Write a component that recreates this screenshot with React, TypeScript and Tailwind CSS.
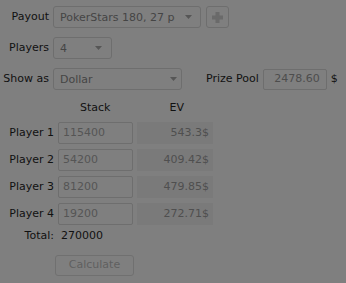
import React from 'react';

const players = [
  { name: 'Player 1', stack: '115400', ev: '543.3$' },
  { name: 'Player 2', stack: '54200', ev: '409.42$' },
  { name: 'Player 3', stack: '81200', ev: '479.85$' },
  { name: 'Player 4', stack: '19200', ev: '272.71$' },
];

function Arrow() {
  return (
    <svg width="7" height="4" viewBox="0 0 7 4" className="shrink-0">
      <path d="M0 0h7L3.5 4z" fill="#565656" />
    </svg>
  );
}

function Select({ value, width, arrowPad = 'pr-2' }: { value: string; width: string; arrowPad?: string }) {
  return (
    <div
      className={`${width} h-[22px] flex items-center justify-between pl-[6px] ${arrowPad} border border-[#6e6e6e] rounded-[3px] bg-[#7f7f7f]`}
    >
      <span className="overflow-hidden whitespace-nowrap text-[#454545] leading-none">{value}</span>
      <Arrow />
    </div>
  );
}

export default function App() {
  return (
    <div className="w-[346px] h-[283px] bg-[#7f7f7f] font-['DejaVu_Sans',sans-serif] text-[11px] text-[#111] overflow-hidden">
      <div className="pt-[6px] flex flex-col gap-[9px]">
        <div className="flex items-center">
          <span className="w-[49px] text-right">Payout</span>
          <div className="ml-[4px] w-[148px] h-[22px] flex items-center pl-[6px] pr-[8px] border border-[#6e6e6e] rounded-[3px]">
            <span className="w-[115px] overflow-hidden whitespace-nowrap text-[#454545] leading-none">
              PokerStars 180, 27 positions
            </span>
            <span className="ml-auto"><Arrow /></span>
          </div>
          <div className="ml-[5px] w-[23px] h-[22px] border border-[#6e6e6e] rounded-[3px] flex items-center justify-center">
            <svg width="11" height="11" viewBox="0 0 11 11">
              <path d="M3.5 0h4v3.5H11v4H7.5V11h-4V7.5H0v-4h3.5z" fill="#6a6a6a" />
            </svg>
          </div>
        </div>
        <div className="flex items-center">
          <span className="w-[49px] text-right">Players</span>
          <div className="ml-[4px]">
            <Select value="4" width="w-[59px]" arrowPad="pr-[9px]" />
          </div>
        </div>
        <div className="flex items-center">
          <span className="w-[49px] text-right">Show as</span>
          <div className="ml-[4px]">
            <Select value="Dollar" width="w-[129px]" arrowPad="pr-[4px]" />
          </div>
          <span className="ml-[24px]">Prize Pool</span>
          <div className="ml-[4px] w-[64px] h-[21px] border border-[#6e6e6e] rounded-[2px] flex items-center justify-end pr-[6px] text-[#4d4d4d]">
            2478.60
          </div>
          <span className="ml-[4px]">$</span>
        </div>
      </div>

      <div className="mt-[12px] flex h-[13px] items-center">
        <span className="ml-[80px]">Stack</span>
        <span className="ml-[59px]">EV</span>
      </div>

      <div className="mt-[7px] flex flex-col gap-[5px]">
        {players.map((p) => (
          <div key={p.name} className="flex items-center">
            <span className="w-[54px] text-right">{p.name}</span>
            <div className="ml-[4px] w-[75px] h-[22px] border border-[#6e6e6e] rounded-[2px] flex items-center pl-[4px] text-[#555]">
              {p.stack}
            </div>
            <div className="ml-[4px] w-[76px] h-[22px] bg-[#7a7a7a] flex items-center justify-end pr-[4px] text-[#4f4f4f]">
              {p.ev}
            </div>
          </div>
        ))}
      </div>

      <div className="mt-[5px] flex items-center h-[13px]">
        <span className="w-[54px] text-right">Total:</span>
        <span className="ml-[7px]">270000</span>
      </div>

      <div className="mt-[12px] ml-[55px] w-[79px] h-[21px] border border-[#707070] rounded-[3px] flex items-center justify-center text-[#5f5f5f]">
        Calculate
      </div>
    </div>
  );
}
